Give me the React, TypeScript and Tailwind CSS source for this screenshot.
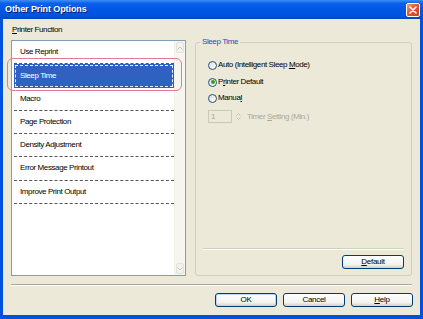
const font = { fontFamily: '"Liberation Sans", Arial, sans-serif' };

const items = [
  'Use Reprint',
  'Sleep Time',
  'Macro',
  'Page Protection',
  'Density Adjustment',
  'Error Message Printout',
  'Improve Print Output',
];

function Radio({ checked }: { checked?: boolean }) {
  return (
    <span className="w-[9px] h-[9px] rounded-full border border-[#1C5180] bg-[linear-gradient(135deg,#DCDCD5,#FFFFFF)] flex items-center justify-center shrink-0">
      {checked && <span className="w-[4px] h-[4px] rounded-full bg-[#2BA12B]" />}
    </span>
  );
}

function Button({ children, def }: { children: React.ReactNode; def?: boolean }) {
  return (
    <button
      className={
        'w-[62px] h-[14px] rounded-[3px] border border-[#003C74] bg-[linear-gradient(to_bottom,#FFFFFF,#F3F3EF_70%,#D6D0C5)] flex items-center justify-center text-[8px] tracking-[-0.3px] text-black leading-none ' +
        (def ? 'shadow-[inset_0_0_0_1px_#BCD4F6]' : '')
      }
    >
      {children}
    </button>
  );
}

export default function App() {
  return (
    <div className="w-[423px] h-[319px] flex flex-col bg-[#0052DE] overflow-hidden" style={font}>
      {/* title bar */}
      <div className="h-[19px] shrink-0 flex items-center justify-between pl-[5px] pr-[3px] bg-[linear-gradient(to_bottom,#3D8EF4_0%,#0A60EA_18%,#0057E6_50%,#0052DD_85%,#0045C4_100%)]">
        <span className="text-white font-bold text-[9px] tracking-[-0.1px] [text-shadow:1px_1px_0_#0A1E6E]">Other Print Options</span>
        <span className="w-[14px] h-[14px] rounded-[2px] border border-white bg-[linear-gradient(135deg,#F0A080,#E3562F_45%,#C9401E)] flex items-center justify-center">
          <svg width="8" height="8" viewBox="0 0 8 8">
            <path d="M1 1 L7 7 M7 1 L1 7" stroke="white" strokeWidth="1.6" strokeLinecap="round" />
          </svg>
        </span>
      </div>

      {/* body */}
      <div className="flex-1 mx-[3px] mb-[4px] bg-[#ECE9D8] px-[8px] flex flex-col">
        <div className="flex gap-[9px]">
          {/* left column */}
          <div className="w-[175px] flex flex-col">
            <div className="h-[12px] mt-[5px] mb-[4px] text-[8px] tracking-[-0.4px] leading-[12px] text-black pl-[1px]">
              <span className="underline">P</span>rinter Function
            </div>
            <div className="relative h-[236px] border border-[#7F9DB9] bg-white flex">
              <div className="flex-1 flex flex-col pl-[2px]">
                {items.map((t, i) =>
                  i === 1 ? (
                    <div
                      key={t}
                      className="h-[23.25px] shrink-0 bg-[#2F62C0] text-white flex items-center pl-[6px] text-[8px] tracking-[-0.4px] outline-1 outline-dashed outline-[#E8EEF8] outline-offset-[-2px]"
                    >
                      {t}
                    </div>
                  ) : (
                    <div
                      key={t}
                      className="h-[23.25px] shrink-0 border-b border-dashed border-[#555555] flex items-center pl-[6px] text-[8px] tracking-[-0.4px] text-black"
                    >
                      {t}
                    </div>
                  )
                )}
              </div>
              {/* scrollbar (disabled) */}
              <div className="w-[11px] flex flex-col bg-[#F6F5F0] border-l border-[#F0EFEA]">
                <div className="h-[11px] m-px rounded-[2px] border border-[#E2E1DA] bg-[#F3F2EC] flex items-center justify-center">
                  <svg width="6" height="4" viewBox="0 0 6 4">
                    <path d="M0.5 3.5 L3 1 L5.5 3.5" stroke="#C8C6BC" strokeWidth="1" fill="none" />
                  </svg>
                </div>
                <div className="flex-1" />
                <div className="h-[11px] m-px rounded-[2px] border border-[#E2E1DA] bg-[#F3F2EC] flex items-center justify-center">
                  <svg width="6" height="4" viewBox="0 0 6 4">
                    <path d="M0.5 0.5 L3 3 L5.5 0.5" stroke="#C8C6BC" strokeWidth="1" fill="none" />
                  </svg>
                </div>
              </div>
              {/* annotation */}
              <div className="absolute left-[-5px] top-[17px] w-[175px] h-[33px] rounded-[6px] border-[1.5px] border-[#E47C8A] pointer-events-none" />
            </div>
          </div>

          {/* right group box */}
          <div className="relative w-[217px] h-[234px] mt-[23px] border border-[#D0D0BF] rounded-[3px] flex flex-col">
            <span className="absolute left-[4px] top-[-6px] px-[2px] bg-[#ECE9D8] text-[8px] tracking-[-0.4px] leading-[10px] text-[#1E4FBF]">
              Sleep Time
            </span>
            <div className="flex flex-col pl-[12px] pt-[17px]">
              <div className="h-[10px] flex items-center gap-[1px] text-[8px] tracking-[-0.4px] text-black">
                <Radio />
                <span>
                  Auto (Intelligent Sleep <span className="underline">M</span>ode)
                </span>
              </div>
              <div className="h-[10px] mt-[7px] flex items-center gap-[1px] text-[8px] tracking-[-0.4px] text-black">
                <Radio checked />
                <span>
                  P<span className="underline">r</span>inter Default
                </span>
              </div>
              <div className="h-[10px] mt-[6px] flex items-center gap-[1px] text-[8px] tracking-[-0.4px] text-black">
                <Radio />
                <span>
                  Manua<span className="underline">l</span>
                </span>
              </div>
              <div className="h-[13px] mt-[7px] flex items-center text-[8px] tracking-[-0.4px]">
                <div className="w-[24px] h-[13px] border border-[#C9C7BA] bg-[#ECE9D8] text-[#ACA899] pl-[2px] flex items-center">1</div>
                <div className="w-[10px] h-[13px] ml-px flex flex-col items-center justify-center gap-[1px]">
                  <svg width="5" height="3" viewBox="0 0 5 3">
                    <path d="M0.5 2.5 L2.5 0.5 L4.5 2.5" stroke="#C2C0B4" fill="none" />
                  </svg>
                  <svg width="5" height="3" viewBox="0 0 5 3">
                    <path d="M0.5 0.5 L2.5 2.5 L4.5 0.5" stroke="#C2C0B4" fill="none" />
                  </svg>
                </div>
                <span className="ml-[4px] text-[#ACA899]">
                  Timer <span className="underline">S</span>etting (Min.)
                </span>
              </div>
            </div>
            <div className="flex-1" />
            <div className="mx-[7px] h-[2px] border-t border-[#D0D0BF] border-b border-b-white" />
            <div className="flex justify-end pr-[7px] pt-[5px] pb-[6px]">
              <Button>
                <span className="underline">D</span>efault
              </Button>
            </div>
          </div>
        </div>

        {/* bottom separator */}
        <div className="mt-[8px] h-[2px] border-t border-[#ACA899] border-b border-b-white" />

        {/* buttons */}
        <div className="flex justify-end gap-[6px] pr-[-1px] mt-[7px] mr-[-1px]">
          <Button def>OK</Button>
          <Button>Cancel</Button>
          <Button>
            <span className="underline">H</span>elp
          </Button>
        </div>
      </div>
    </div>
  );
}
